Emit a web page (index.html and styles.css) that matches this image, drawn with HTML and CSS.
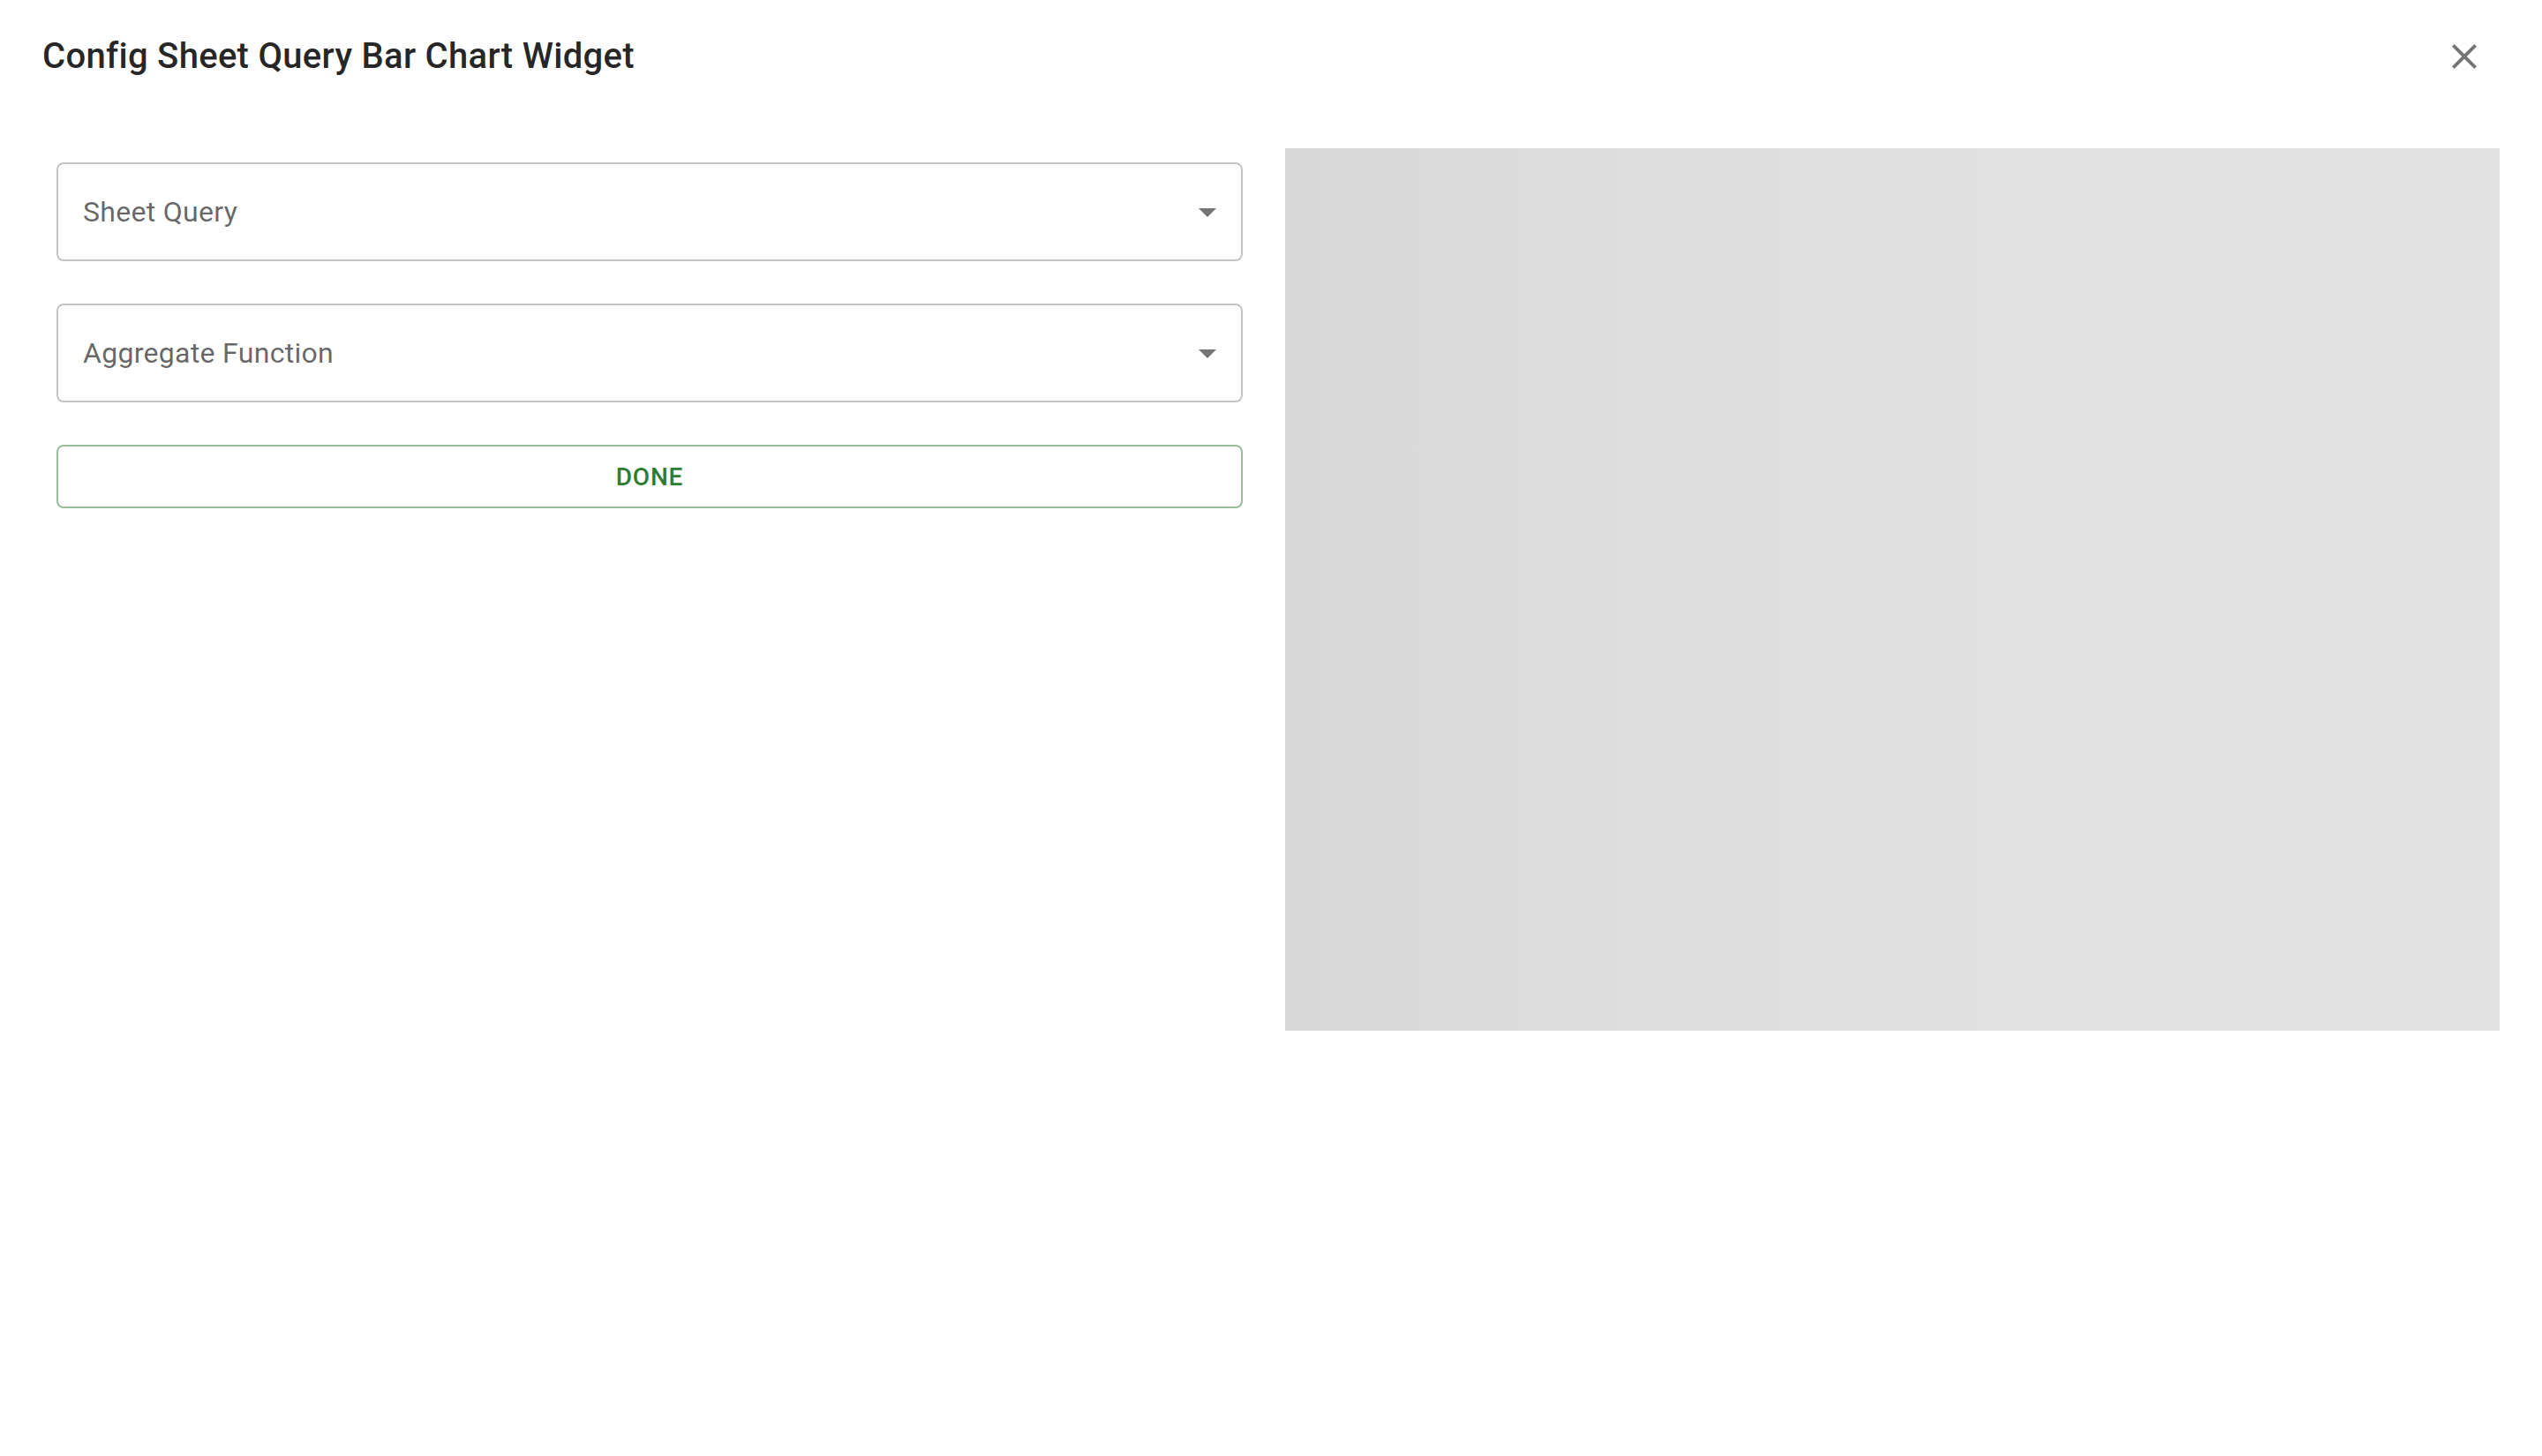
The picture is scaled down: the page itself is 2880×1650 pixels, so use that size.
FILE: index.html
```html
<!DOCTYPE html>
<html lang="en">
<head>
    <meta charset="UTF-8">
    <meta name="viewport" content="width=device-width, initial-scale=1.0">
    <title>Config Sheet Query Bar Chart Widget</title>
    <link rel="stylesheet" href="styles.css">
</head>
<body>

<div class="dialog">
    <div class="dialog-title">
        <h2>Config Sheet Query Bar Chart Widget</h2>
        <button class="close-btn" aria-label="close">
            <svg viewBox="0 0 24 24"><path d="M19 6.41 17.59 5 12 10.59 6.41 5 5 6.41 10.59 12 5 17.59 6.41 19 12 13.41 17.59 19 19 17.59 13.41 12z"></path></svg>
        </button>
    </div>

    <div class="dialog-content">
        <div class="form-col">
            <div class="select">
                <span class="select-label">Sheet Query</span>
                <svg class="select-icon" viewBox="0 0 24 24"><path d="M7 10l5 5 5-5z"></path></svg>
            </div>
            <div class="select">
                <span class="select-label">Aggregate Function</span>
                <svg class="select-icon" viewBox="0 0 24 24"><path d="M7 10l5 5 5-5z"></path></svg>
            </div>
            <button class="done-btn">Done</button>
        </div>
        <div class="preview"></div>
    </div>
</div>

</body>
</html>
```

FILE: styles.css
```css
body {
    margin: 0;
    background: #fff;
    font-family: Roboto, "Liberation Sans", Arial, sans-serif;
}

.dialog {
    display: flex;
    flex-direction: column;
}

.dialog-title {
    display: flex;
    align-items: center;
    justify-content: space-between;
    height: 128px;
    padding: 0 48px;
}

.dialog-title h2 {
    margin: 0;
    font-size: 40px;
    font-weight: 500;
    line-height: 1.6;
    letter-spacing: 0.0075em;
    color: rgba(0, 0, 0, 0.87);
}

.close-btn {
    display: flex;
    align-items: center;
    justify-content: center;
    width: 80px;
    height: 80px;
    padding: 0;
    border: none;
    border-radius: 50%;
    background: none;
    cursor: pointer;
}

.close-btn svg {
    width: 48px;
    height: 48px;
    fill: rgba(0, 0, 0, 0.54);
}

.dialog-content {
    display: grid;
    grid-template-columns: 1fr 1fr;
    gap: 32px;
    padding: 40px 48px;
}

.form-col {
    display: flex;
    flex-direction: column;
    gap: 48px;
    padding: 16px;
}

.select {
    display: flex;
    align-items: center;
    justify-content: space-between;
    height: 112px;
    box-sizing: border-box;
    padding: 0 14px 0 28px;
    border: 2px solid rgba(0, 0, 0, 0.23);
    border-radius: 8px;
}

.select-label {
    font-size: 32px;
    letter-spacing: 0.00938em;
    color: rgba(0, 0, 0, 0.6);
}

.select-icon {
    width: 48px;
    height: 48px;
    fill: rgba(0, 0, 0, 0.54);
}

.done-btn {
    width: 100%;
    height: 72px;
    border: 2px solid rgba(46, 125, 50, 0.5);
    border-radius: 8px;
    background: none;
    font-family: inherit;
    font-size: 28px;
    font-weight: 500;
    letter-spacing: 0.02857em;
    text-transform: uppercase;
    color: #2e7d32;
    cursor: pointer;
}

.preview {
    height: 1000px;
    background: linear-gradient(90deg, #d8d8d8 0%, #dedede 30%, #e1e1e1 60%, #e1e1e1 100%);
}
```
